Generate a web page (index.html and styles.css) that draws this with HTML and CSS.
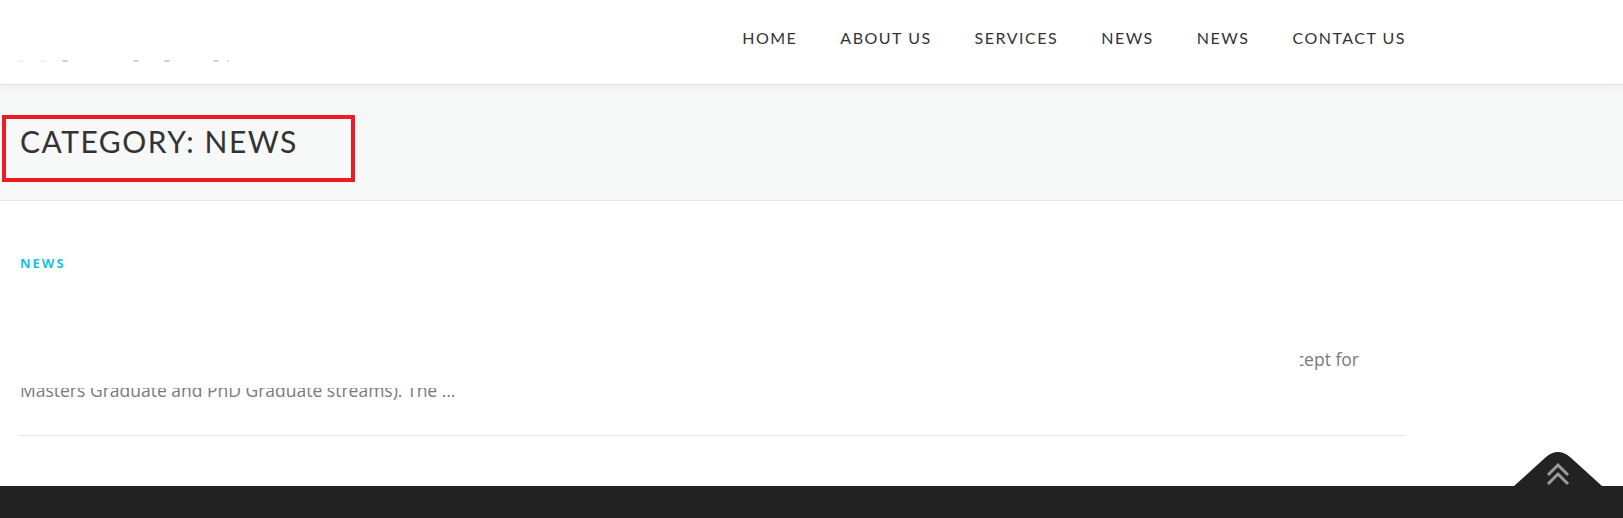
FILE: index.html
```html
<!DOCTYPE html>
<html lang="en">
<head>
    <meta charset="UTF-8">
    <meta name="viewport" content="width=device-width, initial-scale=1.0">
    <title>Category: News</title>
    <link rel="stylesheet" href="styles.css">
</head>
<body>
    <header id="site-header">
        <div class="header-inner">
            <div class="logo-trace">
                <span class="faint"></span><span class="faint"></span><span></span><span></span><span></span><span></span><span class="tiny"></span>
            </div>
            <nav id="main-nav">
                <a href="#">Home</a>
                <a href="#">About Us</a>
                <a href="#">Services</a>
                <a href="#">News</a>
                <a href="#">News</a>
                <a href="#">Contact Us</a>
            </nav>
        </div>
    </header>

    <section id="page-title">
        <h1>Category: News</h1>
        <div class="highlight-box"></div>
    </section>

    <main id="content">
        <article class="post">
            <div class="post-meta">
                <a class="post-cat" href="#">News</a>
            </div>
            <div class="post-body">
                <p class="excerpt">
                    <span class="line-end">Applications for the new academic year are now open for all programmes offered by the university, except for</span>
                    <span>Masters Graduate and PhD Graduate streams). The …</span>
                </p>
                <div class="blank-cover"></div>
            </div>
        </article>
    </main>

    <footer id="site-footer">
        <a href="#" class="to-top">
            <svg width="88" height="34" viewBox="0 0 88 34">
                <path d="M0 34 L32 5 Q44 -5 56 5 L88 34 Z" fill="#222"/>
                <polyline points="34,23 44,13 54,23" fill="none" stroke="#9a9a9a" stroke-width="3"/>
                <polyline points="34,32 44,22 54,32" fill="none" stroke="#9a9a9a" stroke-width="3"/>
            </svg>
        </a>
    </footer>
</body>
</html>
```

FILE: styles.css
```css
body {
    margin: 0;
    font-family: "Open Sans", sans-serif;
    color: #777;
    background: #fff;
    overflow: hidden;
}

a {
    text-decoration: none;
}

#site-header {
    height: 84px;
    background: #fff;
    border-bottom: 1px solid #e2e2e2;
    box-shadow: 0 2px 10px rgba(0, 0, 0, 0.05);
    position: relative;
    z-index: 2;
}

.header-inner {
    width: 1386px;
    padding: 0 20px;
    height: 100%;
    display: flex;
    justify-content: space-between;
    align-items: center;
}

.logo-trace {
    display: flex;
    align-items: center;
    margin-top: 38px;
    margin-left: -2px;
}

.logo-trace span {
    width: 6px;
    height: 2px;
    border-radius: 1px;
    background: #d4d4d4;
    margin-right: 62px;
}

.logo-trace span.faint {
    background: #f0f0f0;
    margin-right: 16px;
}

.logo-trace span:nth-child(3) { margin-right: 65px; }
.logo-trace span:nth-child(4) { margin-right: 25px; }
.logo-trace span:nth-child(5) { margin-right: 43px; }
.logo-trace span:nth-child(6) { margin-right: 8px; }

.logo-trace span.tiny {
    width: 2px;
}

#main-nav {
    display: flex;
    gap: 43px;
    margin-top: -10px;
}

#main-nav a {
    font-family: "Lato", sans-serif;
    font-size: 16px;
    text-transform: uppercase;
    letter-spacing: 1.5px;
    color: #333;
}

#page-title {
    position: relative;
    background: #f7f8f8;
    border-bottom: 1px solid #e4e4e4;
    padding: 38px 20px 41px;
}

#page-title h1 {
    margin: 0;
    font-family: "Lato", sans-serif;
    font-weight: 400;
    font-size: 30px;
    line-height: 36px;
    letter-spacing: 1.5px;
    text-transform: uppercase;
    color: #333;
}

.highlight-box {
    position: absolute;
    left: 2px;
    top: 30px;
    width: 345px;
    height: 59px;
    border: 4px solid #ed1c24;
}

#content {
    width: 1386px;
    padding: 0 20px;
}

.post {
    padding-top: 52px;
    border-bottom: 1px solid #e5e5e5;
    padding-bottom: 29px;
}

.post-meta {
    height: 18px;
    line-height: 18px;
}

.post-cat {
    font-size: 13px;
    font-weight: 700;
    letter-spacing: 2px;
    text-transform: uppercase;
    color: #1cbfe8;
}

.post-body {
    position: relative;
    padding-top: 73px;
}

.excerpt {
    margin: 0;
    font-size: 17.5px;
    line-height: 31px;
    color: #7a7a7a;
}

.excerpt span {
    display: block;
}

.line-end {
    text-align: right;
    width: 1339px;
    white-space: nowrap;
    overflow: hidden;
}

.blank-cover {
    position: absolute;
    left: -20px;
    top: 0;
    width: 1300px;
    height: 117px;
    background: #fff;
}

#site-footer {
    position: relative;
    margin-top: 50px;
    height: 120px;
    background: #222;
}

.to-top {
    position: absolute;
    right: 21px;
    top: -34px;
    display: block;
    line-height: 0;
}
```
